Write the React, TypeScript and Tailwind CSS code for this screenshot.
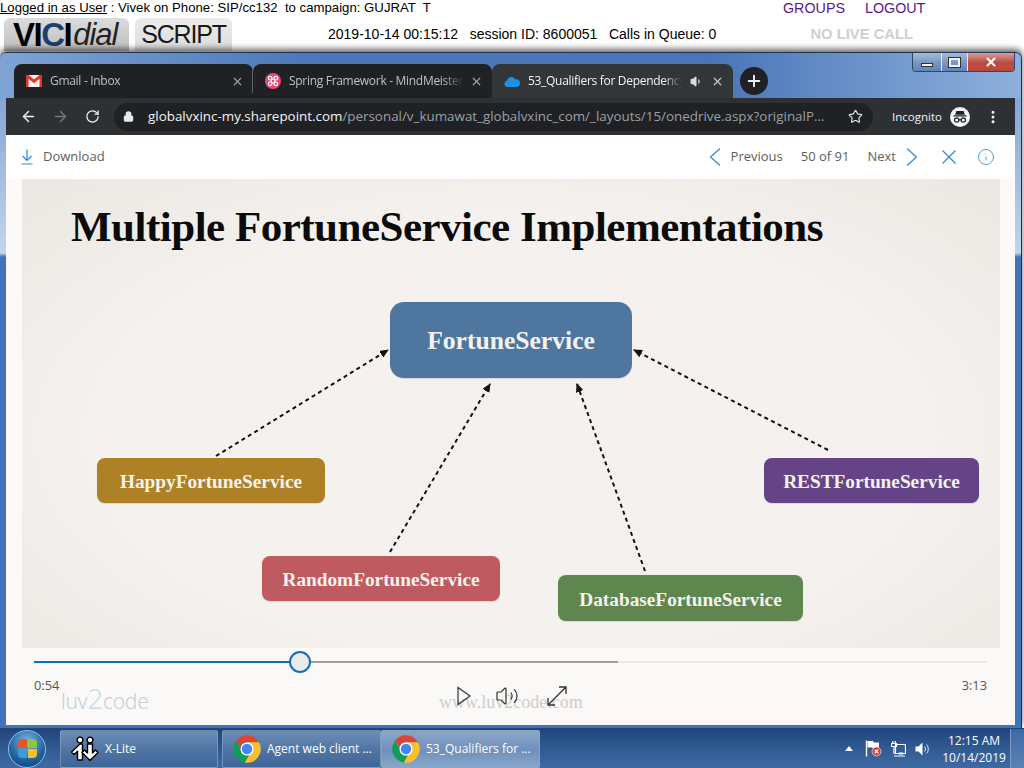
import React from "react";
import { ArrowLeft, ArrowRight, Info, Lock, MoreVertical, Plus, RotateCw, Star, Volume1, Volume2, X } from "lucide-react";

const ChromeIcon: React.FC<{ size: number }> = ({ size }) => (
  <svg width={size} height={size} viewBox="0 0 48 48" aria-hidden="true">
    <path d="M24 2a22 22 0 0 1 19 11H24a11 11 0 0 0-10.500 7.500L6.200 11A22 22 0 0 1 24 2z" fill="#db4437" />
    <path d="M6.200 11l9.500 16.500A11 11 0 0 0 27 34.600L20.500 45.700A22 22 0 0 1 6.200 11z" fill="#0f9d58" />
    <path d="M43 13a22 22 0 0 1-22.500 32.700L30 29a11 11 0 0 0-6-16z" fill="#fbc02d" />
    <circle cx="24" cy="24" r="10.500" fill="#fff" />
    <circle cx="24" cy="24" r="8.300" fill="#4285f4" />
  </svg>
);

const GmailIcon = () => (
  <svg width="16" height="12" viewBox="0 0 16 12" aria-hidden="true">
    <rect width="16" height="12" fill="#f4f1ee" />
    <path d="M0 0h2.500L8 4.600 13.500 0H16v12h-2.500V3.800L8 8.200 2.500 3.800V12H0z" fill="#e0352b" />
  </svg>
);

const MindMeisterIcon = () => (
  <svg width="16" height="16" viewBox="0 0 16 16" aria-hidden="true">
    <circle cx="8" cy="8" r="8" fill="#ea4a78" />
    <circle cx="8" cy="8" r="2" fill="none" stroke="#fff" strokeWidth="1.200" />
    <circle cx="5.200" cy="5.200" r="1.800" fill="none" stroke="#fff" strokeWidth="1.200" />
    <circle cx="10.800" cy="5.200" r="1.800" fill="none" stroke="#fff" strokeWidth="1.200" />
    <circle cx="5.200" cy="10.800" r="1.800" fill="none" stroke="#fff" strokeWidth="1.200" />
    <circle cx="10.800" cy="10.800" r="1.800" fill="none" stroke="#fff" strokeWidth="1.200" />
  </svg>
);

const OneDriveIcon = () => (
  <svg width="16" height="11" viewBox="0 0 16 11" aria-hidden="true">
    <path d="M3.500 11A3.300 3.300 0 0 1 3 4.500 4.500 4.500 0 0 1 11.400 3.500 3.800 3.800 0 0 1 13 11z" fill="#1e90e6" />
  </svg>
);

const IncognitoIcon = () => (
  <svg width="20" height="20" viewBox="0 0 20 20" aria-hidden="true">
    <circle cx="10" cy="10" r="10" fill="#f1f3f4" />
    <path d="M6.300 4h7.400l1.100 3.800H5.200zM3.400 8.300h13.200v1.200H3.400z" fill="#202124" />
    <circle cx="6.700" cy="13" r="2.200" fill="none" stroke="#202124" strokeWidth="1.200" />
    <circle cx="13.300" cy="13" r="2.200" fill="none" stroke="#202124" strokeWidth="1.200" />
    <path d="M8.900 12.800h2.200" stroke="#202124" strokeWidth="1.200" />
  </svg>
);

const TabCard: React.FC<{
  icon: React.ReactNode;
  title: string;
  active?: boolean;
  audio?: boolean;
  divider?: boolean;
  width: string;
}> = ({ icon, title, active, audio, divider, width }) => (
  <div
    className={`relative flex h-[34px] items-center rounded-t-[8px] pr-[9px] pl-[12px] ${width} ${
      active ? "bg-[#323639] text-[#f1f3f4]" : "bg-[#202124] text-[#bdc1c6]"
    }`}
  >
    <div className="flex w-[24px] shrink-0 items-center">{icon}</div>
    <span className="flex-1 overflow-hidden text-[12px] leading-[16px] tracking-[-0.3px] whitespace-nowrap [mask-image:linear-gradient(90deg,#000_88%,transparent)]">
      {title}
    </span>
    {audio && <Volume1 size={13} className="mr-[2px] ml-[8px] shrink-0 fill-[#dadce0] text-[#dadce0]" />}
    <X size={13} strokeWidth={2.2} className={`ml-[6px] shrink-0 ${active ? "text-[#c8cacd]" : "text-[#9aa0a6]"}`} />
    {divider && <div className="absolute top-[5px] right-0 h-[24px] w-px bg-[#5f6368]" />}
  </div>
);

const SlideNode: React.FC<{ label: string; className: string }> = ({ label, className }) => (
  <div
    className={`absolute flex items-center justify-center font-bold text-[#f6f3ee] shadow-[0_1px_1px_rgba(0,0,0,0.12)] ${className}`}
  >
    {label}
  </div>
);

const Arrows = () => (
  <svg className="absolute inset-0" width="978" height="469" viewBox="22 179 978 469" aria-hidden="true">
    <defs>
      <marker id="head" markerWidth="9" markerHeight="8" refX="8" refY="4" orient="auto" markerUnits="userSpaceOnUse">
        <path d="M0 0L9 4 0 8z" fill="#111" />
      </marker>
    </defs>
    <g stroke="#111" strokeWidth="2" strokeDasharray="4 3.500" fill="none">
      <path d="M216 456L388 350" markerEnd="url(#head)" />
      <path d="M390 552L490 384" markerEnd="url(#head)" />
      <path d="M645 571L577 384" markerEnd="url(#head)" />
      <path d="M828 450L634 350" markerEnd="url(#head)" />
    </g>
  </svg>
);

const Slide = () => (
  <div className="relative mr-[15px] ml-[16px] h-[469px] overflow-hidden bg-[radial-gradient(ellipse_at_50%_55%,#f4f1ee_60%,#ebe8e3_100%)] font-['Liberation_Serif',serif]">
    <h1 className="pt-[26px] pl-[49px] text-[43px] leading-[44px] font-bold tracking-[-0.5px] whitespace-nowrap text-[#0b0b0b]">
      Multiple FortuneService Implementations
    </h1>
    <Arrows />
    <SlideNode label="FortuneService" className="top-[123px] left-[368px] h-[76px] w-[242px] rounded-[14px] bg-[#4f769f] pt-[2px] text-[25.600px]" />
    <SlideNode label="HappyFortuneService" className="top-[279px] left-[75px] h-[45px] w-[228px] rounded-[8px] bg-[#ae8127] pt-[4px] text-[19.300px]" />
    <SlideNode label="RandomFortuneService" className="top-[377px] left-[240px] h-[45px] w-[238px] rounded-[8px] bg-[#bf5b60] pt-[4px] text-[19.300px]" />
    <SlideNode label="DatabaseFortuneService" className="top-[396px] left-[536px] h-[46px] w-[245px] rounded-[8px] bg-[#5f864f] pt-[4px] text-[19.300px]" />
    <SlideNode label="RESTFortuneService" className="top-[279px] left-[742px] h-[45px] w-[215px] rounded-[8px] bg-[#644486] pt-[4px] text-[19.300px]" />
  </div>
);

const PlayerControls = () => (
  <div className="relative mr-[15px] ml-[16px] flex-1 bg-[#faf9f7] px-[12px] pt-[13px]">
    <div className="relative flex h-[2px] w-[953px]">
      <div className="w-[266px] bg-[#106ebe]" />
      <div className="w-[318px] bg-[#a19f9d]" />
      <div className="flex-1 bg-[#edebe9]" />
      <div className="absolute top-[-10px] left-[255px] h-[22px] w-[22px] rounded-full border-2 border-[#106ebe] bg-[#eaeaea]" />
    </div>
    <div className="mt-[14px] flex w-[953px] justify-between font-['Open_Sans',sans-serif] text-[12.800px] leading-[16px] text-[#555]">
      <span>0:54</span>
      <span>3:13</span>
    </div>
    <div className="absolute top-[33px] left-[39px] flex items-baseline font-['Noto_Sans',sans-serif] text-[21px] leading-[34px] font-light tracking-[-0.3px] text-[#c6ced6]">
      <span>luv</span>
      <span className="text-[28px] text-[#c9dde9]">2</span>
      <span>code</span>
    </div>
    <span className="absolute top-[44px] left-[417px] font-['Liberation_Serif',serif] text-[18px] leading-[20px] text-[#cfcdcb]">
      www.luv2code.com
    </span>
    <div className="absolute top-[36px] left-[434px] flex items-center gap-[27px] text-[#333]">
      <svg width="16" height="20" viewBox="0 0 16 20" fill="none" stroke="currentColor" strokeWidth="1.200" aria-hidden="true">
        <path d="M2 1.500L14 10 2 18.500z" />
      </svg>
      <Volume2 size={24} strokeWidth={1.2} className="-ml-[4px]" />
      <svg width="22" height="22" viewBox="0 0 22 22" fill="none" stroke="currentColor" strokeWidth="1.300" aria-hidden="true">
        <path d="M2 20L20 2M13 2h7v7M2 13v7h7" />
      </svg>
    </div>
  </div>
);

const ViewerToolbar = () => (
  <div className="flex h-[44px] items-center bg-white pr-[20px] pl-[15px] font-['Open_Sans',sans-serif] text-[13px] text-[#605e5c]">
    <svg width="12" height="16" viewBox="0 0 12 16" fill="none" stroke="#2b88d8" strokeWidth="1.200" aria-hidden="true">
      <path d="M6 0.500V11.500M1.500 7L6 11.500 10.500 7M0.500 15h11" />
    </svg>
    <span className="ml-[10px]">Download</span>
    <div className="flex-1" />
    <svg width="12" height="18" viewBox="0 0 12 18" fill="none" stroke="#2b88d8" strokeWidth="1.200" aria-hidden="true">
      <path d="M11 0.500L1.500 9 11 17.500" />
    </svg>
    <span className="ml-[10px]">Previous</span>
    <span className="ml-[18px]">50 of 91</span>
    <span className="ml-[18px]">Next</span>
    <svg className="ml-[10px]" width="12" height="18" viewBox="0 0 12 18" fill="none" stroke="#2b88d8" strokeWidth="1.200" aria-hidden="true">
      <path d="M1 0.500L10.500 9 1 17.500" />
    </svg>
    <svg className="ml-[24px]" width="14" height="14" viewBox="0 0 14 14" fill="none" stroke="#2b88d8" strokeWidth="1.200" aria-hidden="true">
      <path d="M0.500 0.500l13 13M13.500 0.500l-13 13" />
    </svg>
    <Info size={18} strokeWidth={1.1} className="ml-[21px] text-[#2b88d8]" />
  </div>
);

const BrowserToolbar = () => (
  <div className="flex h-[37px] items-center bg-[#2e3134] pr-[12px] pl-[14px]">
    <ArrowLeft size={17} strokeWidth={2} className="text-[#f1f3f4]" />
    <ArrowRight size={17} strokeWidth={2} className="ml-[15px] text-[#74787c]" />
    <RotateCw size={15} strokeWidth={2} className="ml-[16px] text-[#f1f3f4]" />
    <div className="ml-[14px] flex h-[28px] w-[759px] items-center rounded-full bg-[#202124] pr-[10px] pl-[9px] font-['Open_Sans',sans-serif] text-[13.400px] whitespace-nowrap">
      <Lock size={11} strokeWidth={2.5} className="fill-[#e8eaed] text-[#e8eaed]" />
      <span className="ml-[14px] flex-1 overflow-hidden">
        <span className="text-[#f1f3f4]">globalvxinc-my.sharepoint.com</span>
        <span className="text-[#9aa0a6]">/personal/v_kumawat_globalvxinc_com/_layouts/15/onedrive.aspx?originalP...</span>
      </span>
      <Star size={15} strokeWidth={1.8} className="ml-[18px] text-[#e8eaed]" />
    </div>
    <span className="ml-[19px] font-['Open_Sans',sans-serif] text-[11.500px] text-[#f1f3f4]">Incognito</span>
    <div className="ml-[8px]">
      <IncognitoIcon />
    </div>
    <MoreVertical size={16} strokeWidth={2.5} className="ml-[15px] text-[#f1f3f4]" />
  </div>
);

const WindowControls = () => (
  <div className="absolute top-0 right-[6px] flex h-[19px] w-[103px] overflow-hidden rounded-b-[4px] border border-t-0 border-[#2d466b]">
    <div className="flex w-[29px] items-end justify-center border-r border-[#dfe8f5] bg-[linear-gradient(180deg,#a8bcd9,#7c98c2_50%,#5f84ba)] pb-[4px]">
      <div className="h-[4px] w-[12px] border border-[#333] bg-[#eef2f8]" />
    </div>
    <div className="flex w-[26px] items-center justify-center border-r border-[#dfe8f5] bg-[linear-gradient(180deg,#a8bcd9,#7c98c2_50%,#5f84ba)]">
      <div className="h-[9px] w-[11px] border-2 border-[#eef2f8] outline outline-[#333]" />
    </div>
    <div className="flex flex-1 items-center justify-center bg-[linear-gradient(180deg,#d8a09a,#b84a40_55%,#c8493c_75%,#a84a42)]">
      <X size={14} strokeWidth={3.5} className="text-white" />
    </div>
  </div>
);

const BrowserWindow = () => (
  <div className="relative mr-[2px] flex h-[676px] flex-col rounded-t-[6px] border-t border-r border-[#20344f] pr-[6px] pb-[3px] pl-[6px] shadow-[0_-3px_6px_rgba(0,0,0,0.6)] [background:linear-gradient(90deg,#7fa3d4,#4c78ba_30%,#4a76b8_70%,#8fb0dc_100%)_top/100%_46px_no-repeat,linear-gradient(180deg,#86a6d6_46px,#c4d4e9_200px,#4472b8_204px,#4472b8_100%)]">
    <WindowControls />
    <div className="flex h-[45px] items-end pl-[8px] font-['Open_Sans',sans-serif]">
      <TabCard width="w-[239px]" icon={<GmailIcon />} title="Gmail - Inbox" divider />
      <TabCard width="w-[239px]" icon={<MindMeisterIcon />} title="Spring Framework - MindMeister" />
      <TabCard width="w-[241px]" icon={<OneDriveIcon />} title="53_Qualifiers for Dependency" active audio />
      <div className="mb-[3px] ml-[7px] flex h-[28px] w-[28px] items-center justify-center rounded-full bg-[#202124]">
        <Plus size={18} strokeWidth={2.5} className="text-[#f1f3f4]" />
      </div>
    </div>
    <BrowserToolbar />
    <div className="flex flex-1 flex-col bg-[#fbfaf9]">
      <ViewerToolbar />
      <Slide />
      <PlayerControls />
    </div>
  </div>
);

const PageHeader = () => (
  <div className="h-[52px] bg-white font-['Liberation_Sans',sans-serif] text-[14px] leading-[16px] text-black">
    <div className="flex whitespace-pre">
      <span className="w-[431px] overflow-visible text-[13.200px]">
        <span className="underline">Logged in as User</span> : Vivek on Phone: SIP/cc132  to campaign: GUJRAT  T
      </span>
      <span className="ml-[352px] text-[14.300px] text-[#551a8b]">GROUPS</span>
      <span className="ml-[20px] text-[14.300px] text-[#551a8b]">LOGOUT</span>
    </div>
    <div className="mt-[2px] flex whitespace-pre">
      <div className="ml-[4px] flex h-[33px] w-[125px] items-center rounded-t-[6px] bg-[linear-gradient(180deg,#dcdcdc,#bdbdbd)] pl-[9px] text-[33px] leading-[33px] font-bold tracking-[-1.500px]">
        VI<span className="text-[#1c3f6e]">C</span>I
        <span className="ml-[2px] text-[31px] leading-[33px] font-normal tracking-[-1px] text-[#222] italic">dial</span>
      </div>
      <div className="ml-[6px] flex h-[33px] w-[97px] items-center justify-center rounded-t-[6px] bg-[linear-gradient(180deg,#ececec,#dcdcdc)] text-[25px] leading-[33px] tracking-[-1.200px] text-[#1a1a1a]">
        SCRIPT
      </div>
      <span className="mt-[8px] ml-[96px]">2019-10-14 00:15:12   session ID: 8600051   Calls in Queue: 0</span>
      <span className="mt-[8px] ml-[94px] text-[14.800px] font-bold text-[#cfcfcf]">NO LIVE CALL</span>
    </div>
  </div>
);

const TaskButton: React.FC<{ icon: React.ReactNode; label: string; active?: boolean; width: string }> = ({
  icon,
  label,
  active,
  width,
}) => (
  <div
    className={`flex h-[38px] items-center overflow-hidden rounded-[2px] border border-[#8fa9c9]/60 pl-[9px] ${width} ${
      active
        ? "bg-[linear-gradient(180deg,#8ba6c9,#6f90bb_55%,#88a6cb)]"
        : "bg-[linear-gradient(180deg,#6d8db6,#4f74a3_55%,#3f6699)]"
    }`}
  >
    <div className="flex w-[35px] shrink-0 items-center">{icon}</div>
    <span className="text-[12px] whitespace-nowrap text-white">{label}</span>
  </div>
);

const XLiteIcon = () => (
  <svg width="30" height="26" viewBox="0 0 30 26" aria-hidden="true">
    <g fill="#fff" stroke="#000" strokeWidth="1.400" strokeLinejoin="round">
      <circle cx="10" cy="4" r="2.900" />
      <circle cx="20" cy="4" r="2.900" />
      <path d="M10 8L1.500 16l2.500 2.500 3.500-3.200V24h5V8z" />
      <path d="M17.500 8h5v9l3-3 2.500 2.500-8 8-8-8L14.500 14l3 3z" />
    </g>
  </svg>
);

const FlagTrayIcon = () => (
  <svg width="17" height="17" viewBox="0 0 17 17" aria-hidden="true">
    <path d="M1.500 0.500v16" stroke="#fff" strokeWidth="1.400" />
    <path d="M2.500 1h5.500l1 1.500h5v6H8l-1-1H2.500z" fill="#fff" />
    <circle cx="11.500" cy="11.500" r="4.500" fill="#e03a3a" stroke="#fff" strokeWidth="0.600" />
    <path d="M9.700 9.700l3.600 3.600M13.300 9.700l-3.600 3.600" stroke="#fff" strokeWidth="1.300" />
  </svg>
);

const NetworkTrayIcon = () => (
  <svg width="15" height="16" viewBox="0 0 15 16" fill="none" stroke="#fff" strokeWidth="1.200" aria-hidden="true">
    <path d="M4.500 3.500h10v9h-10z" />
    <path d="M0.500 2.500h5v3h-5zM1.800 0v2.500M4.200 0v2.500M3 5.500V13M3 15h11" />
    <path d="M8 12.500h4" strokeWidth="2" />
  </svg>
);

const VolumeTrayIcon = () => (
  <svg width="15" height="16" viewBox="0 0 15 16" aria-hidden="true">
    <path d="M0.500 5.500h3l4-4v13l-4-4h-3z" fill="#fff" />
    <path d="M9.500 5.500a3.500 3.500 0 0 1 0 5M11.500 3.500a6.500 6.500 0 0 1 0 9" fill="none" stroke="#dfe8f5" strokeWidth="1" />
  </svg>
);

const Taskbar = () => (
  <div className="flex h-[40px] items-center border-t border-[#2a4d7e] bg-[linear-gradient(180deg,#21467c,#2f5a92_50%,#3f6aa3)] pl-[8px] font-['Open_Sans',sans-serif]">
    <div className="flex h-[38px] w-[38px] items-center justify-center rounded-full border border-[#8bc2ea] bg-[radial-gradient(circle_at_50%_30%,#7fb6df,#1e5f9f_60%,#123c6b)]">
      <div className="grid grid-cols-2 gap-[1px]">
        <div className="h-[9px] w-[9px] rounded-tl-[4px] bg-[#e2562b]" />
        <div className="h-[9px] w-[9px] rounded-tr-[4px] bg-[#8ec63f]" />
        <div className="h-[9px] w-[9px] rounded-bl-[4px] bg-[#3f9ad8]" />
        <div className="h-[9px] w-[9px] rounded-br-[4px] bg-[#f6bf26]" />
      </div>
    </div>
    <div className="ml-[14px]">
      <TaskButton width="w-[158px]" icon={<XLiteIcon />} label="X-Lite" />
    </div>
    <div className="ml-[4px]">
      <TaskButton width="w-[159px]" icon={<ChromeIcon size={30} />} label="Agent web client ..." />
    </div>
    <TaskButton width="w-[159px]" icon={<ChromeIcon size={30} />} label="53_Qualifiers for ..." active />
    <div className="flex-1" />
    <div className="h-0 w-0 border-x-[4px] border-b-[5px] border-x-transparent border-b-white" />
    <div className="ml-[12px]">
      <FlagTrayIcon />
    </div>
    <div className="ml-[9px]">
      <NetworkTrayIcon />
    </div>
    <div className="ml-[9px]">
      <VolumeTrayIcon />
    </div>
    <div className="ml-[14px] flex w-[60px] flex-col items-center text-[12px] leading-[17px] text-white">
      <span>12:15 AM</span>
      <span>10/14/2019</span>
    </div>
    <div className="ml-[6px] h-full w-[14px] border-l border-[#7d9cc4] bg-[linear-gradient(180deg,#3d6aa5,#5b82b5)]" />
  </div>
);

export default function App() {
  return (
    <div className="flex h-[768px] w-[1024px] flex-col overflow-hidden bg-white">
      <PageHeader />
      <BrowserWindow />
      <Taskbar />
    </div>
  );
}
